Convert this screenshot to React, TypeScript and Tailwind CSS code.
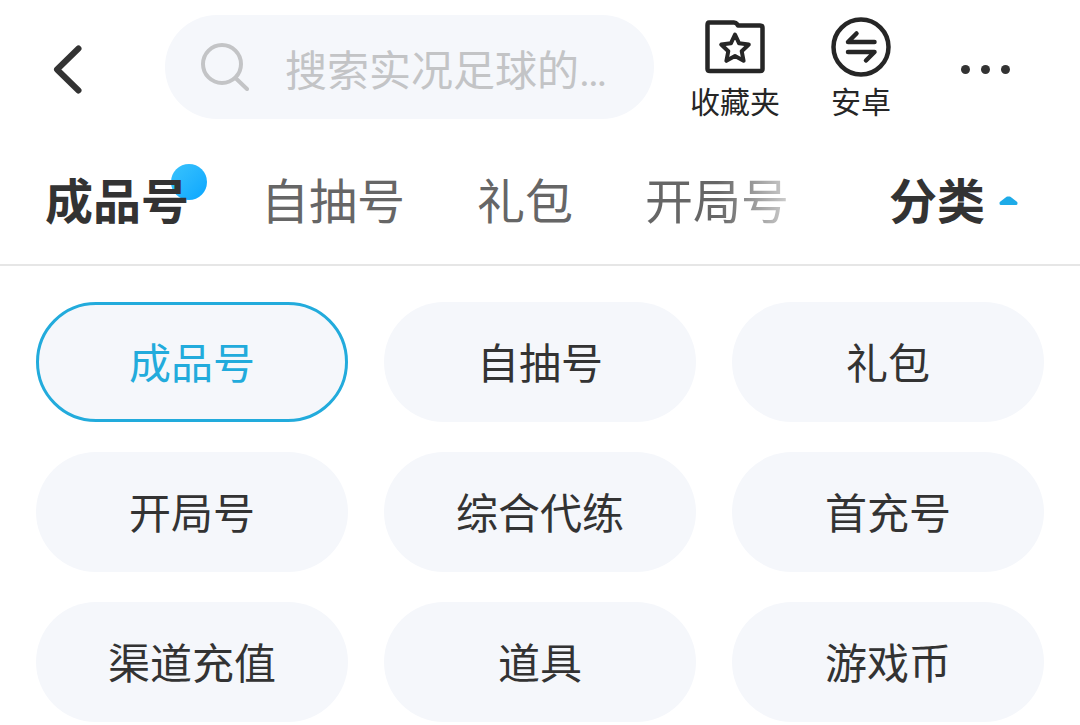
import { useState } from "react";

const tabs = ["成品号", "自抽号", "礼包", "开局号"];

const categories = [
  "成品号",
  "自抽号",
  "礼包",
  "开局号",
  "综合代练",
  "首充号",
  "渠道充值",
  "道具",
  "游戏币",
];

function BackIcon() {
  return (
    <svg className="h-13 w-8" viewBox="0 0 32 52" fill="none" stroke="#333333" strokeWidth="6" strokeLinecap="round" strokeLinejoin="round" aria-hidden="true">
      <path d="M26.500 5.500 5 26.500 26.500 47.500" />
    </svg>
  );
}

function SearchIcon() {
  return (
    <svg className="h-12 w-12 shrink-0" viewBox="0 0 48 48" fill="none" stroke="#c3c4c6" strokeWidth="4" strokeLinecap="round" aria-hidden="true">
      <circle cx="21" cy="21" r="19" />
      <path d="m34.500 35 11.500 11" />
    </svg>
  );
}

function FavoritesIcon() {
  return (
    <svg className="h-15 w-15" viewBox="0 0 60 60" fill="none" stroke="#262626" strokeWidth="4.500" strokeLinecap="round" strokeLinejoin="round" aria-hidden="true">
      <path d="M4 5.500H29Q31 5.500 32 7L33 8.500H55Q57.500 8.500 57.500 11V52Q57.500 54 55 54H5Q2.500 54 2.500 52V8Q2.500 5.500 4 5.500Z" />
      <path strokeWidth="4" d="m30 17.500 4.100 8.800 9.700 1.200-7.100 6.700 1.900 9.600-8.600-4.700-8.600 4.700 1.900-9.600-7.100-6.700 9.700-1.200Z" />
    </svg>
  );
}

function SwitchIcon() {
  return (
    <svg className="h-15 w-15" viewBox="0 0 60 60" fill="none" stroke="#262626" strokeWidth="4.500" strokeLinecap="round" strokeLinejoin="round" aria-hidden="true">
      <circle cx="30" cy="30" r="27.500" />
      <path d="M43.500 25H17L25.500 16.500" />
      <path d="M17 35H43.500L35 43.500" />
    </svg>
  );
}

export default function App() {
  const [active, setActive] = useState("成品号");
  const [query, setQuery] = useState("");

  return (
    <main className="bg-white font-['Roboto','Noto_Sans_CJK_SC',sans-serif] text-[#333333]">
      <header className="flex items-start pt-[15px] pr-[70px] pl-[52px]">
        <button type="button" aria-label="返回" className="flex h-[108px] shrink-0 items-center">
          <BackIcon />
        </button>
        <label className="ml-[81px] flex h-[104px] min-w-0 flex-1 items-center gap-9 rounded-full bg-[#f5f7fb] pr-8 pl-9">
          <SearchIcon />
          <input
            type="text"
            aria-label="搜索"
            value={query}
            onChange={(e) => setQuery(e.target.value)}
            placeholder="搜索实况足球的…"
            className="h-18 w-full min-w-0 bg-transparent pt-2 text-[42px] leading-[64px] outline-none placeholder:text-[#c3c4c6]"
          />
        </label>
        <button type="button" className="ml-9 flex shrink-0 flex-col items-center pt-0.5 text-[30px] leading-[52px] text-[#262626]">
          <FavoritesIcon />
          收藏夹
        </button>
        <button type="button" className="ml-[51px] flex shrink-0 flex-col items-center pt-0.5 text-[30px] leading-[52px] text-[#262626]">
          <SwitchIcon />
          安卓
        </button>
        <button type="button" aria-label="更多" className="ml-[70px] flex h-[108px] shrink-0 items-center gap-[11px]">
          <span className="size-[9px] rounded-full bg-[#333333]" />
          <span className="size-[9px] rounded-full bg-[#333333]" />
          <span className="size-[9px] rounded-full bg-[#333333]" />
        </button>
      </header>

      <div className="flex h-[137px] items-center justify-between border-b-2 border-[#e6e6e6] pt-3 pr-[62px] pl-[45px] text-[48px] leading-[72px]">
        <nav className="flex gap-18">
          {tabs.map((tab, i) => (
            <button
              key={tab}
              type="button"
              className={
                i === 0
                  ? "relative isolate font-bold whitespace-nowrap"
                  : i === tabs.length - 1
                    ? "bg-linear-to-r from-[#666666] from-50% to-[#cfcfcf] bg-clip-text whitespace-nowrap text-transparent"
                    : "whitespace-nowrap text-[#666666]"
              }
            >
              {i === 0 && (
                <span className="absolute -top-[3px] -right-[18px] -z-10 size-9 rounded-full bg-linear-to-br from-[#38c3fc] to-[#04a6ff]" />
              )}
              {tab}
            </button>
          ))}
        </nav>
        <button type="button" aria-expanded="true" className="flex items-center gap-[14px] font-bold whitespace-nowrap">
          分类
          <svg className="mb-1 h-2.5 w-[19px]" viewBox="0 0 19 10" fill="#1eabe8" stroke="#1eabe8" strokeWidth="3" strokeLinejoin="round" aria-hidden="true">
            <path d="M8.500 2H10.500L17 7V7.500H2V7Z" />
          </svg>
        </button>
      </div>

      <section aria-label="分类" className="grid grid-cols-3 gap-x-9 gap-y-[30px] px-9 pt-9">
        {categories.map((name) => (
          <button
            key={name}
            type="button"
            aria-pressed={active === name}
            onClick={() => setActive(name)}
            className={
              active === name
                ? "h-[120px] rounded-full border-3 border-[#22abdc] bg-[#f5f7fb] pt-1.5 text-[42px] leading-[64px] text-[#22abdc]"
                : "h-[120px] rounded-full border-3 border-transparent bg-[#f5f7fb] pt-1.5 text-[42px] leading-[64px]"
            }
          >
            {name}
          </button>
        ))}
      </section>
    </main>
  );
}
